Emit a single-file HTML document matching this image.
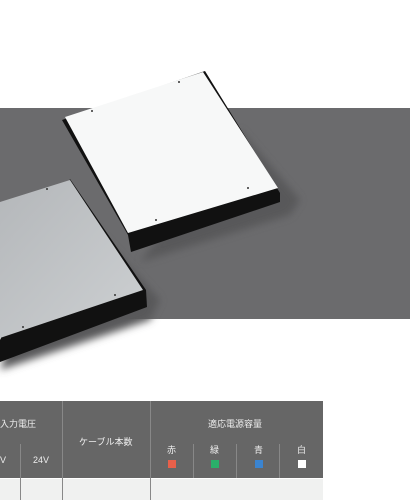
<!DOCTYPE html>
<html><head><meta charset="utf-8"><style>
body{margin:0;width:410px;height:500px;overflow:hidden;background:#fff;font-family:"Liberation Sans","Noto Sans CJK JP",sans-serif;position:relative}
.t{position:absolute;color:#eee;font-size:9px;white-space:nowrap}
.l{position:absolute;width:1px;background:#888}
.sq{position:absolute;width:8px;height:8px;top:460px}
</style></head><body>
<svg width="410" height="400" style="position:absolute;left:0;top:0">
<defs>
<linearGradient id="g1" x1="0" y1="0" x2="1" y2="1"><stop offset="0" stop-color="#b4b7ba"/><stop offset="1" stop-color="#cdd0d2"/></linearGradient>
<filter id="b"><feGaussianBlur stdDeviation="4"/></filter>
</defs>
<rect x="0" y="108" width="410" height="211" fill="#6b6b6d"/>
<polygon points="240,130 300,200 290,215 140,262" fill="#58585a" filter="url(#b)"/>
<polygon points="60,190 160,300 150,320 0,370" fill="#58585a" filter="url(#b)"/>
<polygon points="62,120 205,71 280,193 280,202 131,252 128,235" fill="#111"/>
<polygon points="65,117 203,72 278,188 128,233" fill="#f7f8f8"/>
<polygon points="70,179 146,290 147,307 0,362 0,340" fill="#111"/>
<polygon points="0,202 70,180 143,290 0,338" fill="url(#g1)"/>
<g fill="#333"><circle cx="92" cy="111" r="1"/><circle cx="179" cy="82" r="1"/><circle cx="248" cy="188" r="1"/><circle cx="156" cy="220" r="1"/><circle cx="47" cy="189" r="1"/><circle cx="115" cy="295" r="1"/><circle cx="23" cy="327" r="1"/></g>
</svg>
<div style="position:absolute;left:0;top:401px;width:323px;height:77px;background:#666"></div>
<div style="position:absolute;left:0;top:479px;width:323px;height:21px;background:#f0f1f0"></div>
<div class="l" style="left:62px;top:401px;height:99px"></div>
<div class="l" style="left:150px;top:401px;height:99px"></div>
<div class="l" style="left:20px;top:444px;height:56px"></div>
<div class="l" style="left:193px;top:444px;height:34px"></div>
<div class="l" style="left:236px;top:444px;height:34px"></div>
<div class="l" style="left:279px;top:444px;height:34px"></div>
<div class="t" style="left:0;top:417px">入力電圧</div>
<div class="t" style="left:0;top:455px">V</div>
<div class="t" style="left:33px;top:455px">24V</div>
<div class="t" style="left:79px;top:435px">ケーブル本数</div>
<div class="t" style="left:208px;top:417px">適応電源容量</div>
<div class="t" style="left:167px;top:443px">赤</div>
<div class="t" style="left:210px;top:443px">緑</div>
<div class="t" style="left:254px;top:443px">青</div>
<div class="t" style="left:297px;top:443px">白</div>
<div class="sq" style="left:168px;background:#e8604a"></div>
<div class="sq" style="left:211px;background:#2bb06a"></div>
<div class="sq" style="left:255px;background:#3b84d0"></div>
<div class="sq" style="left:298px;background:#fff"></div>
</body></html>
